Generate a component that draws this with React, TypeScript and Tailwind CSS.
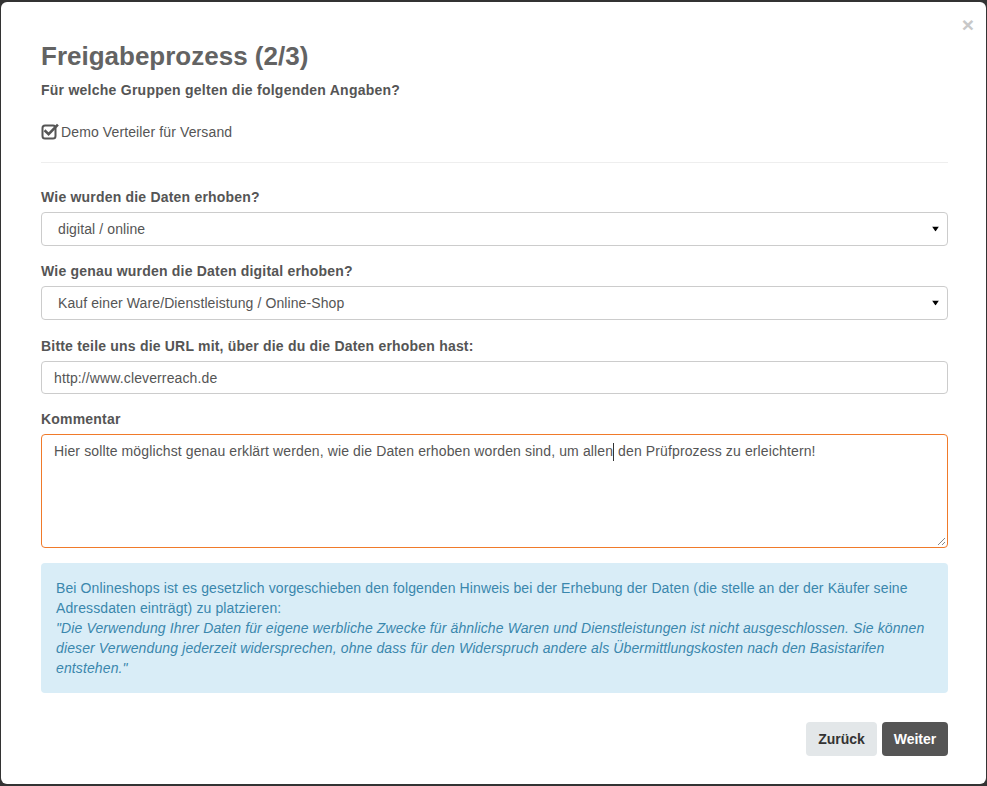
import React from 'react'

const font = { fontFamily: '"Liberation Sans", Arial, Helvetica, sans-serif' }

function CheckSquare() {
  return (
    <svg width="18" height="17" viewBox="0 0 18 17" className="shrink-0">
      <rect x="1.5" y="2.5" width="13" height="13" rx="2.5" fill="none" stroke="#555" strokeWidth="2" />
      <path d="M4.5 8.2 L7.6 11.2 L16 2.6" fill="none" stroke="#555" strokeWidth="2.6" strokeLinecap="square" />
    </svg>
  )
}

function Caret() {
  return (
    <svg width="7" height="5" viewBox="0 0 7 5" className="absolute right-[8px] top-1/2 -translate-y-1/2">
      <path d="M0 0 H7 L3.5 5 Z" fill="#000" />
    </svg>
  )
}

function SelectBox({ value }: { value: string }) {
  return (
    <div className="relative h-[34px] w-full rounded-[4px] border border-[#ccc] bg-white">
      <select
        defaultValue={value}
        className="h-full w-full appearance-none bg-transparent pl-[16px] pr-8 text-[14px] tracking-[0.1px] text-[#555] outline-none"
      >
        <option>{value}</option>
      </select>
      <Caret />
    </div>
  )
}

function Label({ children }: { children: React.ReactNode }) {
  return (
    <div className="mb-[5px] text-[14px] font-bold leading-[20px] tracking-[0.2px] text-[#555]">{children}</div>
  )
}

export default function App() {
  return (
    <div className="h-[786px] w-full bg-[#333] px-[1px] py-[2px]" style={font}>
      <div className="relative h-full w-full rounded-[6px] bg-white pl-[40px] pr-[38px] pt-[40px]">
        <button className="absolute right-[12px] top-[12px] text-[21px] font-bold leading-none text-[#c8c8c8]">
          ×
        </button>

        <h3 className="mb-[9px] text-[26px] font-bold leading-[29px] text-[#636363]">Freigabeprozess (2/3)</h3>
        <p className="mb-[21px] text-[14px] font-bold leading-[20px] tracking-[0.25px] text-[#555]">
          Für welche Gruppen gelten die folgenden Angaben?
        </p>

        <label className="flex items-center gap-[2px] text-[14px] leading-[20px] tracking-[0.12px] text-[#555]">
          <CheckSquare />
          <span className="mt-[1px]">Demo Verteiler für Versand</span>
        </label>

        <hr className="mb-[24px] mt-[20px] border-t border-[#eee]" />

        <div className="mb-[15px]">
          <Label>Wie wurden die Daten erhoben?</Label>
          <SelectBox value="digital / online" />
        </div>

        <div className="mb-[16px]">
          <Label>Wie genau wurden die Daten digital erhoben?</Label>
          <SelectBox value="Kauf einer Ware/Dienstleistung / Online-Shop" />
        </div>

        <div className="mb-[15px]">
          <Label>Bitte teile uns die URL mit, über die du die Daten erhoben hast:</Label>
          <input
            defaultValue="http://www.cleverreach.de"
            className="h-[33px] w-full rounded-[4px] border border-[#ccc] px-[12px] text-[14px] tracking-[0.12px] text-[#555] outline-none"
          />
        </div>

        <div className="mb-[15px]">
          <Label>Kommentar</Label>
          <div className="relative h-[114px] w-full rounded-[4px] border border-[#f07a2a] px-[12px] py-[6px] text-[14px] leading-[20px] tracking-[0.12px] text-[#555]">
            Hier sollte möglichst genau erklärt werden, wie die Daten erhoben worden sind, um allen
            <span className="inline-block h-[18px] w-0 border-l border-[#333] align-middle" />
            {' '}den Prüfprozess zu erleichtern!
            <svg width="9" height="9" viewBox="0 0 9 9" className="absolute bottom-[1px] right-[1px]">
              <path d="M8 1 L1 8 M8 5 L5 8" stroke="#888" strokeWidth="1" />
            </svg>
          </div>
        </div>

        <div className="rounded-[4px] bg-[#d9edf7] p-[15px] text-[14px] leading-[20px] tracking-[0.12px] text-[#3a87ad]">
          Bei Onlineshops ist es gesetzlich vorgeschieben den folgenden Hinweis bei der Erhebung der Daten (die stelle an der
          der Käufer seine Adressdaten einträgt) zu platzieren:
          <br />
          <i>
            "Die Verwendung Ihrer Daten für eigene werbliche Zwecke für ähnliche Waren und Dienstleistungen ist nicht
            ausgeschlossen. Sie können dieser Verwendung jederzeit widersprechen, ohne dass für den Widerspruch andere als
            Übermittlungskosten nach den Basistarifen entstehen."
          </i>
        </div>

        <div className="mt-[29px] flex justify-end gap-[5px]">
          <button className="h-[34px] w-[71px] rounded-[4px] bg-[#e3e7e9] text-[14px] font-bold text-[#333]">Zurück</button>
          <button className="h-[34px] w-[66px] rounded-[4px] bg-[#555] text-[14px] font-bold text-white">Weiter</button>
        </div>
      </div>
    </div>
  )
}
